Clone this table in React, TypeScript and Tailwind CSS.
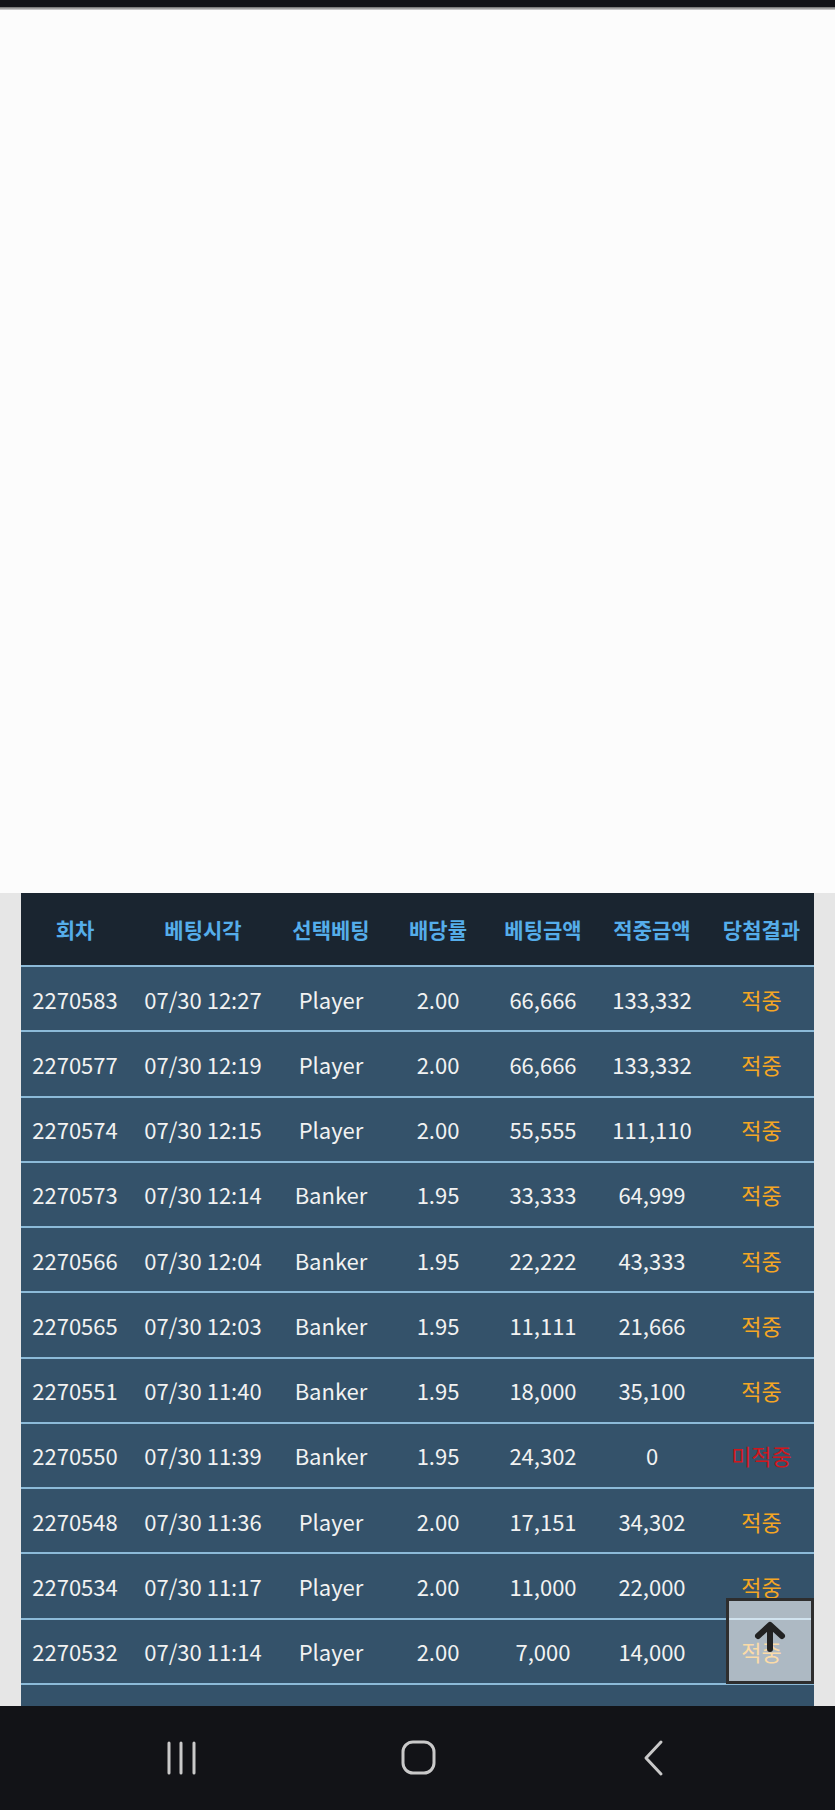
import React from 'react';

type Bet = {
  round: string;
  time: string;
  pick: string;
  odds: string;
  amount: string;
  payout: string;
  win: boolean;
};

const BETS: Bet[] = [
  { round: '2270583', time: '07/30 12:27', pick: 'Player', odds: '2.00', amount: '66,666', payout: '133,332', win: true },
  { round: '2270577', time: '07/30 12:19', pick: 'Player', odds: '2.00', amount: '66,666', payout: '133,332', win: true },
  { round: '2270574', time: '07/30 12:15', pick: 'Player', odds: '2.00', amount: '55,555', payout: '111,110', win: true },
  { round: '2270573', time: '07/30 12:14', pick: 'Banker', odds: '1.95', amount: '33,333', payout: '64,999', win: true },
  { round: '2270566', time: '07/30 12:04', pick: 'Banker', odds: '1.95', amount: '22,222', payout: '43,333', win: true },
  { round: '2270565', time: '07/30 12:03', pick: 'Banker', odds: '1.95', amount: '11,111', payout: '21,666', win: true },
  { round: '2270551', time: '07/30 11:40', pick: 'Banker', odds: '1.95', amount: '18,000', payout: '35,100', win: true },
  { round: '2270550', time: '07/30 11:39', pick: 'Banker', odds: '1.95', amount: '24,302', payout: '0', win: false },
  { round: '2270548', time: '07/30 11:36', pick: 'Player', odds: '2.00', amount: '17,151', payout: '34,302', win: true },
  { round: '2270534', time: '07/30 11:17', pick: 'Player', odds: '2.00', amount: '11,000', payout: '22,000', win: true },
  { round: '2270532', time: '07/30 11:14', pick: 'Player', odds: '2.00', amount: '7,000', payout: '14,000', win: true },
];

const HEADERS = ['회차', '베팅시각', '선택베팅', '배당률', '베팅금액', '적중금액', '당첨결과'];

const GRID = 'grid grid-cols-[108px_148px_108px_106px_104px_114px_105px]';

function NavBar() {
  return (
    <div className="h-[104px] bg-[#121317] flex items-center">
      <div className="flex-1 flex justify-center pl-[63px]">
        <svg width="36" height="36" viewBox="0 0 36 36" fill="none" stroke="#c9c9c9" strokeWidth="3" strokeLinecap="round">
          <path d="M6 3v30M18 3v30M31 3v30" />
        </svg>
      </div>
      <div className="flex-1 flex justify-center pl-[3px]">
        <svg width="38" height="38" viewBox="0 0 38 38" fill="none" stroke="#c9c9c9" strokeWidth="3">
          <rect x="3" y="3" width="31" height="31" rx="10" />
        </svg>
      </div>
      <div className="flex-1 flex justify-center pr-[64px]">
        <svg width="26" height="38" viewBox="0 0 26 38" fill="none" stroke="#c9c9c9" strokeWidth="3" strokeLinecap="round" strokeLinejoin="round">
          <path d="M20 3L5 19l15 16" />
        </svg>
      </div>
    </div>
  );
}

export default function App() {
  return (
    <div className="w-[835px] h-[1810px] flex flex-col overflow-hidden bg-[#fcfcfc] font-['Noto_Sans_CJK_KR','Noto_Sans',sans-serif]">
      <div className="h-[7px] bg-[#121317]" />
      <div className="h-[3px] bg-gradient-to-b from-[#6b6b6b] to-[#d8d8d8]" />
      <div className="h-[883px] bg-[#fcfcfc]" />

      <div className="relative flex-1 bg-[#e6e6e6] px-[21px] overflow-hidden">
        <div className="bg-[#34526a] h-full">
          <div className={`${GRID} h-[72px] bg-[#1a2530] items-center`}>
            {HEADERS.map((h) => (
              <div key={h} className="text-center text-[21px] font-bold text-[#55adea] leading-none">
                {h}
              </div>
            ))}
          </div>
          {BETS.map((b) => (
            <div
              key={b.round}
              className={`${GRID} h-[65.27px] border-t-2 border-[#8cbad8] items-center text-[22px] text-[#f2f2f2] leading-none`}
            >
              <div className="text-center">{b.round}</div>
              <div className="text-center">{b.time}</div>
              <div className="text-center">{b.pick}</div>
              <div className="text-center">{b.odds}</div>
              <div className="text-center">{b.amount}</div>
              <div className="text-center">{b.payout}</div>
              <div className={`text-center ${b.win ? 'text-[#f5a623]' : 'text-[#d0161c]'}`}>
                {b.win ? '적중' : '미적중'}
              </div>
            </div>
          ))}
          <div className="border-t-2 border-[#8cbad8]" />
        </div>

        <button className="absolute left-[726px] top-[705px] w-[88px] h-[86px] border-[3px] border-[#2e2e2e] bg-white/60 flex items-center justify-center">
          <svg width="32" height="32" viewBox="0 0 32 32" fill="none" stroke="#222" strokeWidth="6" strokeLinecap="round" strokeLinejoin="round" className="-mt-[8px]">
            <path d="M16 28V5M4 15L16 4l12 11" />
          </svg>
        </button>
      </div>

      <NavBar />
    </div>
  );
}
